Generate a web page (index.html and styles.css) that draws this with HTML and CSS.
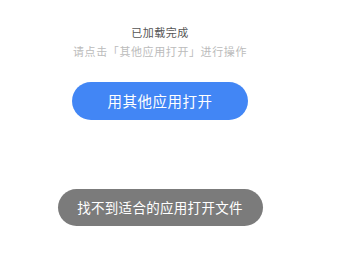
FILE: index.html
```html
<!DOCTYPE html>
<html lang="zh">
<head>
<meta charset="utf-8">
<link rel="stylesheet" href="styles.css">
</head>
<body>
<div class="page">
  <div class="title">已加载完成</div>
  <div class="sub">请点击「其他应用打开」进行操作</div>
  <div class="btn">用其他应用打开</div>
  <div class="toast">找不到适合的应用打开文件</div>
</div>
</body>
</html>
```
FILE: styles.css
```css
html, body {
  margin: 0;
  padding: 0;
  background: #fff;
}
.page {
  width: 320px;
  height: 258px;
  display: flex;
  flex-direction: column;
  align-items: center;
  font-family: "Noto Sans CJK SC", "Noto Sans", sans-serif;
  padding-top: 25px;
  box-sizing: border-box;
}
.title {
  font-size: 11px;
  line-height: 14px;
  color: #555;
  letter-spacing: 0.5px;
}
.sub {
  margin-top: 5px;
  font-size: 11px;
  line-height: 14px;
  color: #bbb;
  letter-spacing: 0.6px;
}
.btn {
  margin-top: 24px;
  width: 176px;
  height: 38px;
  border-radius: 19px;
  background: #4286f5;
  color: #fff;
  font-size: 14.5px;
  line-height: 38px;
  text-align: center;
  letter-spacing: 0.5px;
}
.toast {
  margin-top: 69px;
  width: 205px;
  height: 37px;
  border-radius: 19px;
  background: #7b7b7b;
  color: #fff;
  font-size: 13.5px;
  line-height: 37px;
  text-align: center;
  letter-spacing: 0.3px;
}
```
